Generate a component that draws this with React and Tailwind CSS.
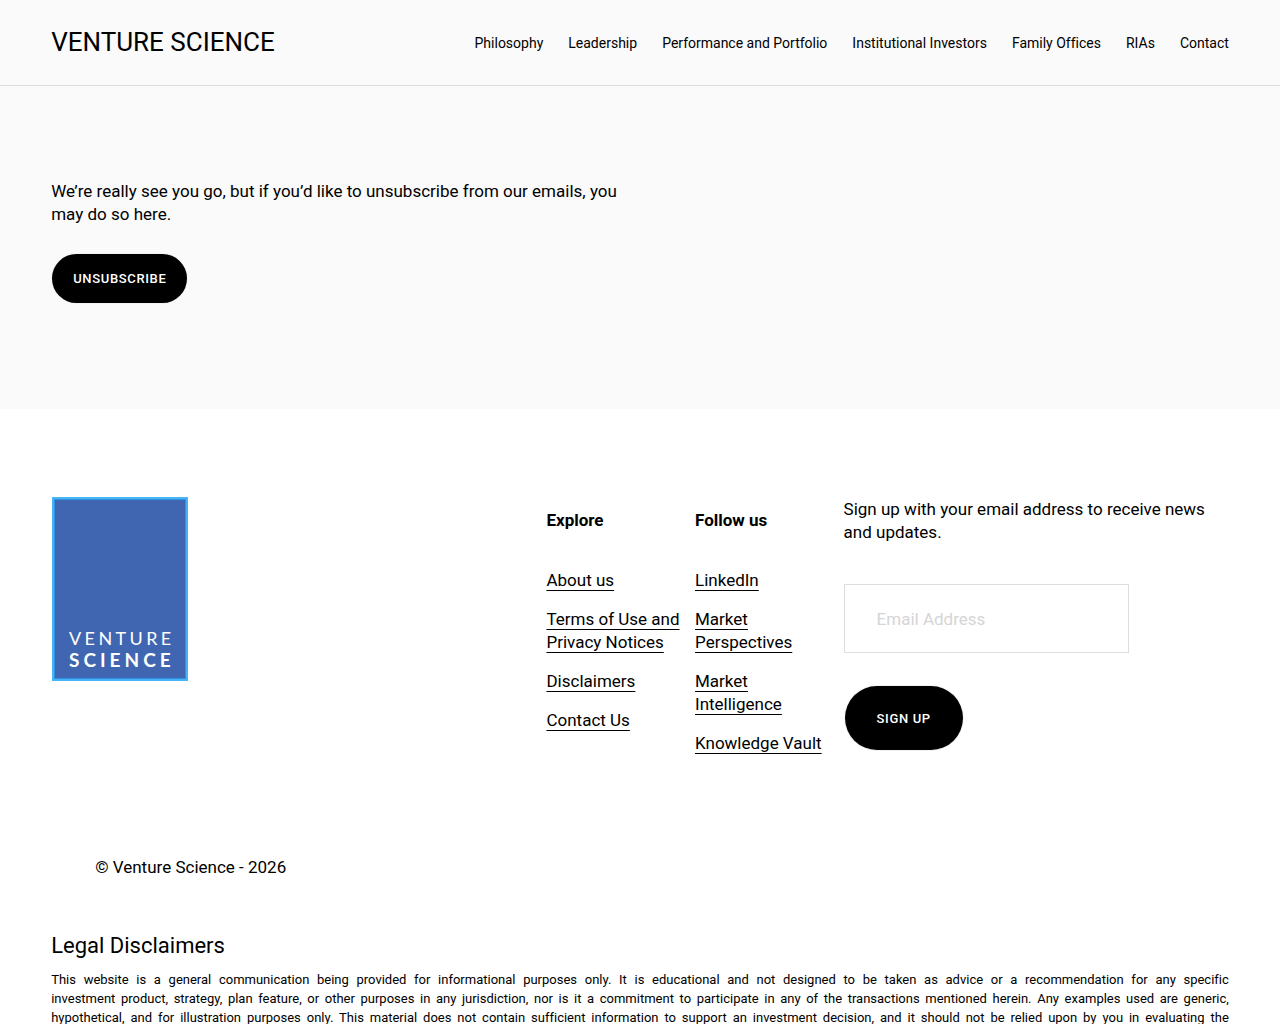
import React, { useState } from 'react'

const NAV_LINKS = [
  'Philosophy',
  'Leadership',
  'Performance and Portfolio',
  'Institutional Investors',
  'Family Offices',
  'RIAs',
  'Contact'
]

const EXPLORE_LINKS = ['About us', 'Terms of Use and Privacy Notices', 'Disclaimers', 'Contact Us']
const FOLLOW_LINKS = ['LinkedIn', 'Market Perspectives', 'Market Intelligence', 'Knowledge Vault']

function Header() {
  return (
    <header className="flex items-center justify-between border-b border-[#dddddd] bg-[#fafafa] px-[4vw] py-6">
      <a href="#" className="text-[26px] leading-[37px]">VENTURE SCIENCE</a>
      <nav className="flex gap-[25px] text-[14px] leading-6">
        {NAV_LINKS.map((label) => (
          <a key={label} href="#">{label}</a>
        ))}
      </nav>
    </header>
  )
}

function Logo() {
  return (
    <svg viewBox="0 0 137 184" className="w-[137px]" role="img" aria-label="Venture Science">
      <rect x="1" y="0" width="136" height="184" fill="#45b5f5" />
      <rect x="3" y="2" width="132" height="180" fill="#2f8fe0" />
      <rect x="4" y="3" width="130" height="178" fill="#4066b1" />
      <g fill="#ffffff" fontFamily="Lato, sans-serif">
        <text x="18" y="148" fontSize="18" letterSpacing="3.4">VENTURE</text>
        <text x="18" y="170" fontSize="19" fontWeight="700" letterSpacing="4">SCIENCE</text>
      </g>
    </svg>
  )
}

function LinkColumn({ title, links }) {
  return (
    <div className="col-span-3 pt-3">
      <h2 className="font-bold">{title}</h2>
      <ul className="mt-[37px] flex flex-col gap-4">
        {links.map((label) => (
          <li key={label}>
            <a href="#" className="underline decoration-1 underline-offset-4 [text-decoration-skip-ink:none]">
              {label}
            </a>
          </li>
        ))}
      </ul>
    </div>
  )
}

function SignUp() {
  const [email, setEmail] = useState('')

  return (
    <form className="col-span-8 pt-px" onSubmit={(e) => e.preventDefault()}>
      <p>Sign up with your email address to receive news and updates.</p>
      <input
        type="email"
        aria-label="Email Address"
        placeholder="Email Address"
        value={email}
        onChange={(e) => setEmail(e.target.value)}
        className="mt-10 block h-[69px] w-[74%] border border-[#dddddd] bg-white px-8 placeholder:text-[#d5d5d5]"
      />
      <button
        type="submit"
        className="mt-8 h-[66px] rounded-full border border-white/95 bg-black px-8 text-[13px] font-medium tracking-wider text-white"
      >
        SIGN UP
      </button>
    </form>
  )
}

export default function App() {
  return (
    <div className="bg-white font-['Roboto',sans-serif] text-[17px] leading-[23px] text-black [font-variant-ligatures:none]">
      <Header />
      <main className="bg-[#fafafa] px-[4vw] pt-[94px] pb-[105px]">
        <p className="w-1/2">
          We’re really see you go, but if you’d like to unsubscribe from our emails, you may do so here.
        </p>
        <button
          type="button"
          className="mt-[27px] h-[51px] rounded-full border border-white/95 bg-black px-[21px] text-[13px] font-medium tracking-wider text-white"
        >
          UNSUBSCRIBE
        </button>
      </main>
      <footer className="px-[4vw] pt-[88px]">
        <div className="grid grid-cols-24 gap-x-[11px]">
          <div className="col-span-10">
            <Logo />
          </div>
          <LinkColumn title="Explore" links={EXPLORE_LINKS} />
          <LinkColumn title="Follow us" links={FOLLOW_LINKS} />
          <SignUp />
        </div>
        <p className="mt-[101px] px-11">© Venture Science - 2026</p>
        <h2 className="mt-[51px] text-[22px] leading-8">Legal Disclaimers</h2>
        <p className="mt-2 text-justify text-[13px] leading-[19px] [text-align-last:justify]">
          This website is a general communication being provided for informational purposes only. It is
          educational and not designed to be taken as advice or a recommendation for any specific
          <br />
          investment product, strategy, plan feature, or other purposes in any jurisdiction, nor is it a
          commitment to participate in any of the transactions mentioned herein. Any examples used are
          generic,
          <br />
          hypothetical, and for illustration purposes only. This material does not contain
          sufficient information to support an investment decision, and it should not be relied upon by
          you in evaluating the
        </p>
      </footer>
    </div>
  )
}
